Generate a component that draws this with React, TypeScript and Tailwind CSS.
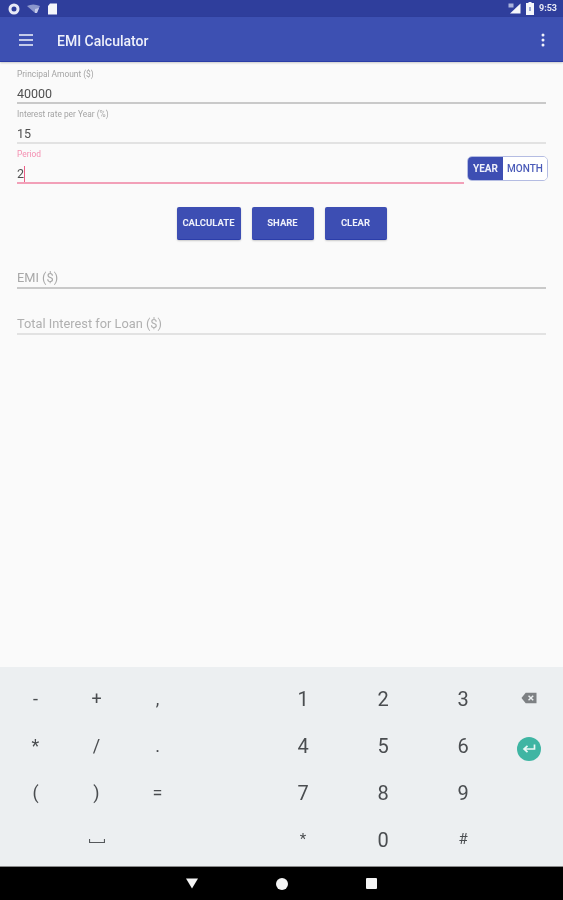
const leftKeys = [
  ["-", "+", ","],
  ["*", "/", "."],
  ["(", ")", "="],
  ["", "⎵", ""],
];
const rightKeys = [
  ["1", "2", "3"],
  ["4", "5", "6"],
  ["7", "8", "9"],
  ["*", "0", "#"],
];

function StatusBar() {
  return (
    <div className="h-[17px] bg-[#2f3e9c] flex items-center justify-between pl-[8px] pr-[6px] text-white">
      <div className="flex items-center gap-[7px]">
        {/* notification icons */}
        <svg width="12" height="12" viewBox="0 0 12 12">
          <circle cx="6" cy="6" r="4" fill="none" stroke="#e8eaf6" strokeWidth="3" />
        </svg>
        <svg width="13" height="10" viewBox="0 0 13 10">
          <path d="M0 2 Q6 -1 13 2 L9.5 9 H8 Z" fill="#8c97cc" />
          <path d="M8 5 L12 4 L10 9 H8 Z" fill="#c5cae9" />
        </svg>
        <svg width="11" height="12" viewBox="0 0 11 12">
          <path d="M3 0.5 H10 V11.5 H1 V3 Z" fill="#f5f6fb" />
        </svg>
      </div>
      <div className="flex items-center">
        <svg width="13" height="11" viewBox="0 0 13 11" className="mr-[5px]">
          <path d="M12.5 0.5 V10.5 H2 Z" fill="#f5f6fb" />
          <rect x="0.5" y="0.5" width="5" height="4" fill="#a9b2dc" />
        </svg>
        <svg width="8" height="13" viewBox="0 0 8 13" className="mr-[5px]">
          <path d="M2.5 0 H5.5 V1 H8 V13 H0 V1 H2.5 Z" fill="#f5f6fb" />
          <rect x="3" y="5" width="2" height="4" fill="#9aa5d6" />
        </svg>
        <span className="text-[9px] font-bold leading-none text-[#e8eaf6]">9:53</span>
      </div>
    </div>
  );
}

function Toolbar() {
  return (
    <div className="h-[45px] bg-[#3d50b2] border-b border-[#2a3ca6] flex items-center pt-[2px] pl-[19px] pr-[18px] shadow-[0_1px_2px_rgba(0,0,0,0.2)] text-white">
      <svg width="14" height="12" viewBox="0 0 14 12" className="mr-[24px]">
        <path d="M0 1 H14 M0 6 H14 M0 11 H14" stroke="#f1f3fb" strokeWidth="1.6" />
      </svg>
      <span className="mt-[2px] text-[14px] font-medium leading-none text-[#eef0fa]">EMI Calculator</span>
      <svg width="4" height="14" viewBox="0 0 4 14" className="ml-auto">
        <circle cx="2" cy="2" r="1.5" fill="#f1f3fb" />
        <circle cx="2" cy="7" r="1.5" fill="#f1f3fb" />
        <circle cx="2" cy="12" r="1.5" fill="#f1f3fb" />
      </svg>
    </div>
  );
}

function Field({ label, value, line }: { label: string; value: string; line: string }) {
  return (
    <div className="h-[40px]">
      <div className="h-[12px] text-[8.4px] leading-[12px] text-[#a4a4a4]">{label}</div>
      <div className="h-[22px] pt-[6px] text-[12.5px] leading-[16px] text-[#505050]">{value}</div>
      <div className={`h-[2px] ${line}`} />
    </div>
  );
}

function ActionButton({ text, width }: { text: string; width: string }) {
  return (
    <button
      className={`h-[33px] ${width} rounded-[2px] bg-[#3d4eb3] border-b border-[#2b3daa] text-[9.5px] font-bold text-[#eef0fa] shadow-[0_1px_2px_rgba(0,0,0,0.2)]`}
    >
      {text}
    </button>
  );
}

function Keyboard() {
  return (
    <div className="h-[199px] bg-[#eceff1] pt-[8px] pl-[5px] grid grid-cols-[61px_61px_61px_75px_80px_80px_80px_52px] auto-rows-[47px] items-center justify-items-center text-[#4a4d50]">
      {leftKeys.map((row, r) => (
        <div key={r} className="contents">
          {row.map((k, i) => (
            <span key={i} className="text-[18px] leading-none">
              {k === "⎵" ? (
                <svg width="16" height="6" viewBox="0 0 16 6" className="mt-[3px]">
                  <path d="M0.5 1 V4.5 H15.5 V1" fill="none" stroke="#55585b" strokeWidth="1.2" />
                </svg>
              ) : (
                k
              )}
            </span>
          ))}
          <span />
          {rightKeys[r].map((k, i) => (
            <span key={i} className={`${k === "*" || k === "#" ? "text-[15px]" : "text-[20px]"} leading-none`}>
              {k}
            </span>
          ))}
          {r === 0 && (
            <svg width="16" height="12" viewBox="0 0 17 12" className="mb-[2px]">
              <path d="M5 0.5 H16.5 V11.5 H5 L0.5 6 Z" fill="#7d8083" />
              <path d="M8 3.5 L13 8.5 M13 3.5 L8 8.5" stroke="#eceff1" strokeWidth="1.5" />
            </svg>
          )}
          {r === 1 && (
            <div className="mt-[6px] w-[24px] h-[24px] rounded-full bg-[#3fb5a3] flex items-center justify-center">
              <svg width="14" height="10" viewBox="0 0 14 10">
                <path d="M12.5 0.5 V5 H2.5 M5.5 1.8 L2 5 L5.5 8.2" fill="none" stroke="#e9f7f5" strokeWidth="1.7" />
              </svg>
            </div>
          )}
          {r > 1 && <span />}
        </div>
      ))}
    </div>
  );
}

function NavBar() {
  return (
    <div className="h-[34px] bg-black border-t border-[#8a8a8a] flex items-center pl-[186px]">
      <svg width="12" height="11" viewBox="0 0 13 11">
        <path d="M0 0 H13 L6.5 11 Z" fill="#f5f5f5" />
      </svg>
      <div className="ml-[78px] w-[12px] h-[12px] rounded-full bg-[#f5f5f5]" />
      <div className="ml-[78px] w-[11px] h-[11px] rounded-[1px] bg-[#f5f5f5]" />
    </div>
  );
}

export default function App() {
  return (
    <div className="w-[563px] h-[900px] flex flex-col bg-[#fafafa] overflow-hidden font-['Roboto',sans-serif] blur-[0.4px]">
      <StatusBar />
      <Toolbar />

      <div className="flex-1 pt-[6px] px-[17px]">
        <div className="w-[529px]">
          <Field label="Principal Amount ($)" value="40000" line="bg-[#c9c9c9]" />
          <Field label="Interest rate per Year (%)" value="15" line="bg-[#e2e2e2]" />
        </div>

        <div className="flex items-start">
          <div className="w-[447px] shrink-0 h-[40px]">
            <div className="h-[12px] text-[8.4px] leading-[12px] text-[#f48fb1]">Period</div>
            <div className="h-[22px] pt-[6px] text-[12.5px] leading-[16px] text-[#505050] flex">
              2<span className="w-px h-[16px] bg-[#ec5f86]" />
            </div>
            <div className="h-[2px] bg-[#f2a0b8]" />
          </div>
          <div className="shrink-0 ml-[3px] mt-[8px] w-[81px] h-[25px] flex rounded-[5px] border border-[#b4bce2] overflow-hidden text-[10px] font-medium leading-none">
            <div className="w-[35px] bg-[#3d4eb3] text-[#eef0fa] font-bold flex items-center justify-center">YEAR</div>
            <div className="flex-1 bg-white text-[#4a5ab8] flex items-center justify-center">MONTH</div>
          </div>
        </div>

        <div className="mt-[19px] flex justify-center gap-[11px] w-[529px]">
          <ActionButton text="CALCULATE" width="w-[64px]" />
          <ActionButton text="SHARE" width="w-[62px]" />
          <ActionButton text="CLEAR" width="w-[62px]" />
        </div>

        <div className="w-[529px] mt-[26px]">
          <div className="h-[21px] pt-[4px] text-[12.8px] leading-[16px] text-[#a8a8a8]">EMI ($)</div>
          <div className="h-[2px] bg-[#c9c9c9]" />
          <div className="mt-[25px] h-[19px] pt-[2px] text-[12.8px] leading-[16px] text-[#b0b0b0]">Total Interest for Loan ($)</div>
          <div className="h-[2px] bg-[#e2e2e2]" />
        </div>
      </div>

      <Keyboard />
      <NavBar />
    </div>
  );
}
